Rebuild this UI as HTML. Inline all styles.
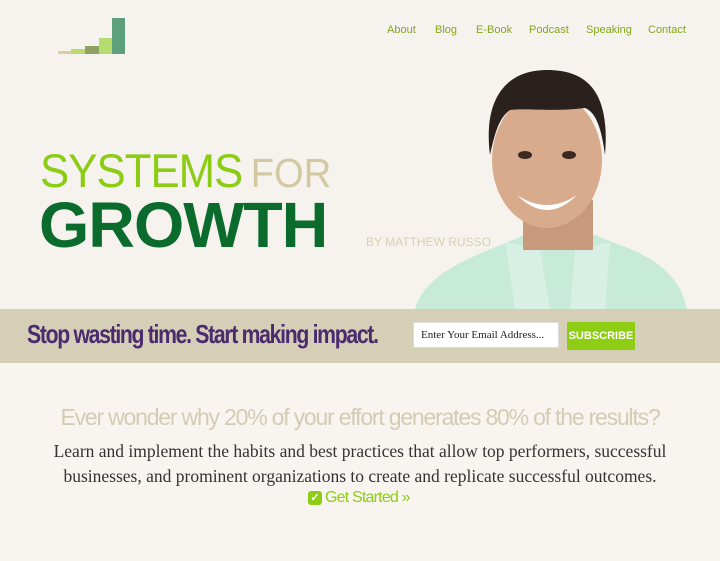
<!DOCTYPE html>
<html><head><style>
body{margin:0;width:720px;height:561px;overflow:hidden;background:#f8f5f1;font-family:"Liberation Sans",sans-serif;position:relative}
.a{position:absolute}
nav a{position:absolute;top:24px;font-size:11px;color:#84a51c;text-decoration:none}
</style></head><body>
<div class="a" style="left:0;top:0;width:720px;height:309px;background:#f6f3ef"></div>
<div class="a" style="left:58px;top:51px;width:14px;height:3px;background:#d8cfa6"></div>
<div class="a" style="left:71px;top:49px;width:14px;height:5px;background:#b8dc70"></div>
<div class="a" style="left:85px;top:46px;width:14px;height:8px;background:#8fa264"></div>
<div class="a" style="left:99px;top:38px;width:13px;height:16px;background:#b5dc6e"></div>
<div class="a" style="left:112px;top:18px;width:13px;height:36px;background:#5fa07c"></div>
<nav>
<a style="left:387px">About</a><a style="left:435px">Blog</a><a style="left:476px">E-Book</a><a style="left:529px">Podcast</a><a style="left:586px">Speaking</a><a style="left:648px">Contact</a>
</nav>
<div class="a" style="left:40px;top:146px;font-size:47px;color:#8ccc14;letter-spacing:-1px;line-height:50px;transform:scaleX(0.93);transform-origin:left">SYSTEMS<span style="color:#d2c9a2;font-size:41px;letter-spacing:0;margin-left:9px">FOR</span></div>
<div class="a" style="left:39px;top:193px;font-size:64px;font-weight:bold;color:#0a6b2d;line-height:64px;letter-spacing:-1px;transform:scaleX(1.01);transform-origin:left">GROWTH</div>
<div class="a" style="left:366px;top:235px;font-size:12px;color:#d8d0b0">BY MATTHEW RUSSO</div>
<svg class="a" style="left:405px;top:60px" width="290" height="250">
<path d="M10 249 C20 215 60 200 95 185 L120 175 L190 175 L215 185 C250 198 275 215 282 249 Z" fill="#c8ead8"/>
<path d="M100 182 L135 190 L145 249 L110 249 Z" fill="#d7f0e3"/>
<path d="M205 182 L170 190 L165 249 L200 249 Z" fill="#d7f0e3"/>
<rect x="118" y="140" width="70" height="50" fill="#c9997c"/>
<ellipse cx="142" cy="100" rx="55" ry="68" fill="#d9ab8d"/>
<path d="M85 95 C78 40 100 10 142 10 C185 10 205 35 200 95 C196 65 190 52 180 48 C150 52 120 48 105 50 C94 58 90 72 85 95 Z" fill="#2b211c"/>
<path d="M112 135 Q142 165 172 135 Q142 155 112 135 Z" fill="#fff"/>
<ellipse cx="120" cy="95" rx="7" ry="4" fill="#3a2a22"/><ellipse cx="164" cy="95" rx="7" ry="4" fill="#3a2a22"/>
</svg>
<div class="a" style="left:0;top:309px;width:720px;height:54px;background:#d6cfb8"></div>
<div class="a" style="left:27px;top:319px;font-size:26px;font-weight:bold;color:#4b2a6d;letter-spacing:-1.6px;transform:scaleX(0.815);transform-origin:left;white-space:nowrap">Stop wasting time. Start making impact.</div>
<div class="a" style="left:413px;top:322px;width:144px;height:24px;background:#fff;border:1px solid #ddd;font-family:'Liberation Serif',serif;font-size:11px;line-height:24px;text-indent:7px;color:#222">Enter Your Email Address...</div>
<div class="a" style="left:567px;top:322px;width:68px;height:28px;background:#8fcc14;color:#fff;font-weight:bold;font-size:11px;line-height:28px;text-align:center">SUBSCRIBE</div>
<div class="a" style="left:0;top:404px;width:720px;text-align:center;font-size:23px;color:#d3cbb2;letter-spacing:-1.2px">Ever wonder why 20% of your effort generates 80% of the results?</div>
<div class="a" style="left:0;top:439px;width:720px;text-align:center;font-family:'Liberation Serif',serif;font-size:17.5px;line-height:25px;color:#333">Learn and implement the habits and best practices that allow top performers, successful<br>businesses, and prominent organizations to create and replicate successful outcomes.</div>
<div class="a" style="left:308px;top:491px;width:14px;height:14px;background:#8fcc14;border-radius:3px;color:#fff;font-size:11px;line-height:14px;text-align:center;font-weight:bold">✓</div>
<div class="a" style="left:325px;top:489px;font-size:16px;color:#8fcc14;letter-spacing:-0.8px">Get Started »</div>
</body></html>
